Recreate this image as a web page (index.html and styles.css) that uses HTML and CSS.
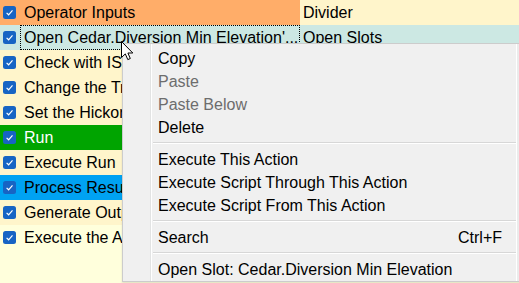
FILE: index.html
```html
<!DOCTYPE html>
<html>
<head>
<meta charset="utf-8">
<link rel="stylesheet" href="styles.css">
</head>
<body>
<div class="list">
  <div class="row">
    <div class="main orange"><span class="cb"><svg width="13" height="13" viewBox="0 0 13 13"><rect x="0" y="0" width="13" height="13" rx="2.5" fill="#1764c4"/><path d="M3.6 6.9 L5.6 8.8 L9.5 4.4" fill="none" stroke="#fff" stroke-width="1.2"/></svg></span><span class="label">Operator Inputs</span></div>
    <div class="side yellow">Divider</div>
  </div>
  <div class="row">
    <div class="main cyan"><span class="cb"><svg width="13" height="13" viewBox="0 0 13 13"><rect x="0" y="0" width="13" height="13" rx="2.5" fill="#1764c4"/><path d="M3.6 6.9 L5.6 8.8 L9.5 4.4" fill="none" stroke="#fff" stroke-width="1.2"/></svg></span><span class="label focus">Open Cedar.Diversion Min Elevation'...</span></div>
    <div class="side cyan">Open Slots</div>
  </div>
  <div class="row">
    <div class="main yellow"><span class="cb"><svg width="13" height="13" viewBox="0 0 13 13"><rect x="0" y="0" width="13" height="13" rx="2.5" fill="#1764c4"/><path d="M3.6 6.9 L5.6 8.8 L9.5 4.4" fill="none" stroke="#fff" stroke-width="1.2"/></svg></span><span class="label">Check with ISW</span></div>
    <div class="side"></div>
  </div>
  <div class="row">
    <div class="main yellow"><span class="cb"><svg width="13" height="13" viewBox="0 0 13 13"><rect x="0" y="0" width="13" height="13" rx="2.5" fill="#1764c4"/><path d="M3.6 6.9 L5.6 8.8 L9.5 4.4" fill="none" stroke="#fff" stroke-width="1.2"/></svg></span><span class="label">Change the Tr</span></div>
    <div class="side"></div>
  </div>
  <div class="row">
    <div class="main yellow"><span class="cb"><svg width="13" height="13" viewBox="0 0 13 13"><rect x="0" y="0" width="13" height="13" rx="2.5" fill="#1764c4"/><path d="M3.6 6.9 L5.6 8.8 L9.5 4.4" fill="none" stroke="#fff" stroke-width="1.2"/></svg></span><span class="label">Set the Hickor</span></div>
    <div class="side"></div>
  </div>
  <div class="row">
    <div class="main green"><span class="cb"><svg width="13" height="13" viewBox="0 0 13 13"><rect x="0" y="0" width="13" height="13" rx="2.5" fill="#1764c4"/><path d="M3.6 6.9 L5.6 8.8 L9.5 4.4" fill="none" stroke="#fff" stroke-width="1.2"/></svg></span><span class="label">Run</span></div>
    <div class="side"></div>
  </div>
  <div class="row">
    <div class="main yellow"><span class="cb"><svg width="13" height="13" viewBox="0 0 13 13"><rect x="0" y="0" width="13" height="13" rx="2.5" fill="#1764c4"/><path d="M3.6 6.9 L5.6 8.8 L9.5 4.4" fill="none" stroke="#fff" stroke-width="1.2"/></svg></span><span class="label">Execute Run</span></div>
    <div class="side"></div>
  </div>
  <div class="row">
    <div class="main blue"><span class="cb"><svg width="13" height="13" viewBox="0 0 13 13"><rect x="0" y="0" width="13" height="13" rx="2.5" fill="#1764c4"/><path d="M3.6 6.9 L5.6 8.8 L9.5 4.4" fill="none" stroke="#fff" stroke-width="1.2"/></svg></span><span class="label">Process Result</span></div>
    <div class="side"></div>
  </div>
  <div class="row">
    <div class="main yellow"><span class="cb"><svg width="13" height="13" viewBox="0 0 13 13"><rect x="0" y="0" width="13" height="13" rx="2.5" fill="#1764c4"/><path d="M3.6 6.9 L5.6 8.8 L9.5 4.4" fill="none" stroke="#fff" stroke-width="1.2"/></svg></span><span class="label">Generate Outp</span></div>
    <div class="side"></div>
  </div>
  <div class="row">
    <div class="main pale"><span class="cb"><svg width="13" height="13" viewBox="0 0 13 13"><rect x="0" y="0" width="13" height="13" rx="2.5" fill="#1764c4"/><path d="M3.6 6.9 L5.6 8.8 L9.5 4.4" fill="none" stroke="#fff" stroke-width="1.2"/></svg></span><span class="label">Execute the An</span></div>
    <div class="side"></div>
  </div>
</div>

<div class="menu">
  <div class="item">Copy</div>
  <div class="item disabled">Paste</div>
  <div class="item disabled">Paste Below</div>
  <div class="item">Delete</div>
  <div class="sep"></div>
  <div class="item">Execute This Action</div>
  <div class="item">Execute Script Through This Action</div>
  <div class="item">Execute Script From This Action</div>
  <div class="sep"></div>
  <div class="item"><span>Search</span><span class="key">Ctrl+F</span></div>
  <div class="sep"></div>
  <div class="item">Open Slot: Cedar.Diversion Min Elevation</div>
</div>

<svg class="cursor" width="13" height="20" viewBox="0 0 13 20"><path d="M0.5 0.5 L0.5 16.5 L4.3 12.9 L6.8 18.6 L9.3 17.5 L6.9 12 L11.8 12 Z" fill="#fff" stroke="#000" stroke-width="1" stroke-linejoin="miter"/></svg>
</body>
</html>
```
FILE: styles.css
```css
html, body {
  margin: 0;
  padding: 0;
}
body {
  width: 519px;
  height: 283px;
  overflow: hidden;
  background: #ffffdc;
  font-family: "Liberation Sans", Arial, sans-serif;
  font-size: 16px;
  color: #000;
  position: relative;
}
.list {
  display: flex;
  flex-direction: column;
}
.row {
  display: grid;
  grid-template-columns: 300px 1fr;
  height: 25px;
}
.main {
  display: flex;
  align-items: center;
  padding-left: 3px;
  gap: 4px;
  white-space: nowrap;
  overflow: hidden;
}
.cb {
  width: 13px;
  height: 13px;
  display: flex;
  flex: none;
}
.label {
  flex: 1;
  padding-left: 3px;
  height: 23px;
  line-height: 23px;
  border: 1px solid transparent;
}
.label.focus {
  border: 1px dotted #000;
}
.side {
  padding-left: 3px;
  line-height: 25px;
  white-space: nowrap;
}
.orange { background: #ffad69; }
.cyan { background: #cce8e3; }
.yellow { background: #fff5cb; }
.pale { background: #ffffdc; }
.green { background: #00a400; color: #fff; }
.blue { background: #00a2f2; }

.menu {
  position: absolute;
  left: 122px;
  top: 43px;
  width: 398px;
  height: 234px;
  padding-top: 3px;
  background: #f0f0f0 linear-gradient(to right, transparent 27px, #e2e3e3 27px, #e2e3e3 28px, #ffffff 28px, #ffffff 29px, transparent 29px);
  border: 1px solid #cccccc;
  border-right: none;
  box-shadow: inset -4px 0 0 #ebebeb, inset -5px 0 0 #ffffff, 0 2px 2px rgba(0,0,0,0.1);
}
.item {
  height: 23px;
  line-height: 23px;
  padding-left: 35px;
  padding-right: 19px;
  display: flex;
  justify-content: space-between;
  white-space: nowrap;
}
.item.disabled { color: #6d6d6d; }
.sep {
  height: 1px;
  margin: 3px 5px 4px 30px;
  border-top: 1px solid #d7d7d7;
  background: #fff;
}
.cursor {
  position: absolute;
  left: 121px;
  top: 41px;
}
```
